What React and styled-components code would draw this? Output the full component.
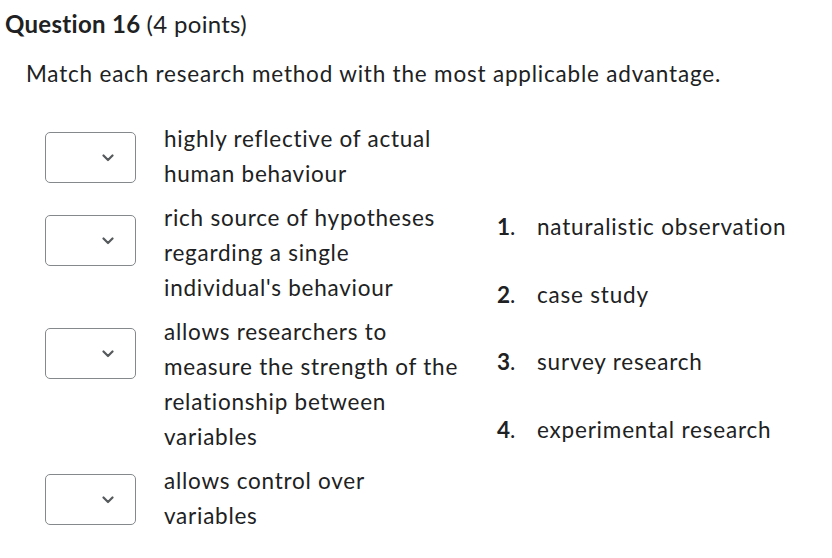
import React from 'react'
import styled, { createGlobalStyle } from 'styled-components'

const GlobalStyle = createGlobalStyle`
  html, body {
    margin: 0;
    padding: 0;
    background: #ffffff;
  }
  body {
    font-family: Lato, "Noto Sans", sans-serif;
    color: #202122;
  }
`

const Page = styled.div`
  width: 832px;
  height: 558px;
  padding: 9px 0 0 5px;
  box-sizing: border-box;
  overflow: hidden;
`

const Title = styled.h2`
  margin: 0;
  font-size: 24px;
  line-height: 30px;
  font-weight: 700;
  letter-spacing: 0.3px;
  & > span {
    font-weight: 400;
  }
`

const Prompt = styled.p`
  margin: 17px 0 30px 21px;
  font-size: 22.5px;
  line-height: 35px;
  letter-spacing: 0.8px;
`

const Body = styled.div`
  display: flex;
  align-items: flex-start;
  margin-left: 40px;
`

const Pairs = styled.div`
  display: flex;
  flex-direction: column;
  gap: 9px;
  width: 420px;
`

const Row = styled.div`
  display: flex;
  align-items: flex-start;
  gap: 28px;
`

const Select = styled.div`
  flex: 0 0 auto;
  box-sizing: border-box;
  width: 91px;
  height: 51px;
  margin-top: ${(p) => p.$offset}px;
  border: 1px solid #85898c;
  border-radius: 5px;
  background: #fff;
  display: flex;
  align-items: center;
  justify-content: flex-end;
  padding-right: 21px;
  color: #565a5c;
`

const PairText = styled.div`
  font-size: 22.5px;
  line-height: 35px;
  letter-spacing: 0.75px;
`

const Choices = styled.ol`
  list-style: none;
  margin: 0 0 0 32px;
  padding: 88px 0 0;
  display: flex;
  flex-direction: column;
  gap: 32.5px;
`

const Choice = styled.li`
  display: flex;
  font-size: 22.5px;
  line-height: 35px;
  letter-spacing: 0.8px;
`

const Num = styled.span`
  width: 40px;
  flex: 0 0 auto;
  letter-spacing: 0;
  & > b {
    font-weight: 700;
  }
`

const Chevron = () => (
  <svg width="12" height="8" viewBox="0 0 12 8" fill="none">
    <path d="M1.5 1.5 6 6 10.5 1.5" stroke="currentColor" strokeWidth="2.2" strokeLinecap="round" strokeLinejoin="round" />
  </svg>
)

const pairs = [
  { offset: 11, lines: ['highly reflective of actual', 'human behaviour'] },
  { offset: 15, lines: ['rich source of hypotheses', 'regarding a single', "individual's behaviour"] },
  { offset: 14, lines: ['allows researchers to', 'measure the strength of the', 'relationship between', 'variables'] },
  { offset: 11, lines: ['allows control over', 'variables'] },
]

const choices = ['naturalistic observation', 'case study', 'survey research', 'experimental research']

export default function App() {
  return (
    <Page>
      <GlobalStyle />
      <Title>Question 16 <span>(4 points)</span></Title>
      <Prompt>Match each research method with the most applicable advantage.</Prompt>
      <Body>
        <Pairs>
          {pairs.map((pair, i) => (
            <Row key={i}>
              <Select $offset={pair.offset}><Chevron /></Select>
              <PairText>
                {pair.lines.map((line, j) => (
                  <React.Fragment key={j}>
                    {j > 0 && <br />}
                    {line}
                  </React.Fragment>
                ))}
              </PairText>
            </Row>
          ))}
        </Pairs>
        <Choices>
          {choices.map((c, i) => (
            <Choice key={c}>
              <Num><b>{i + 1}</b>.</Num>
              <span>{c}</span>
            </Choice>
          ))}
        </Choices>
      </Body>
    </Page>
  )
}
